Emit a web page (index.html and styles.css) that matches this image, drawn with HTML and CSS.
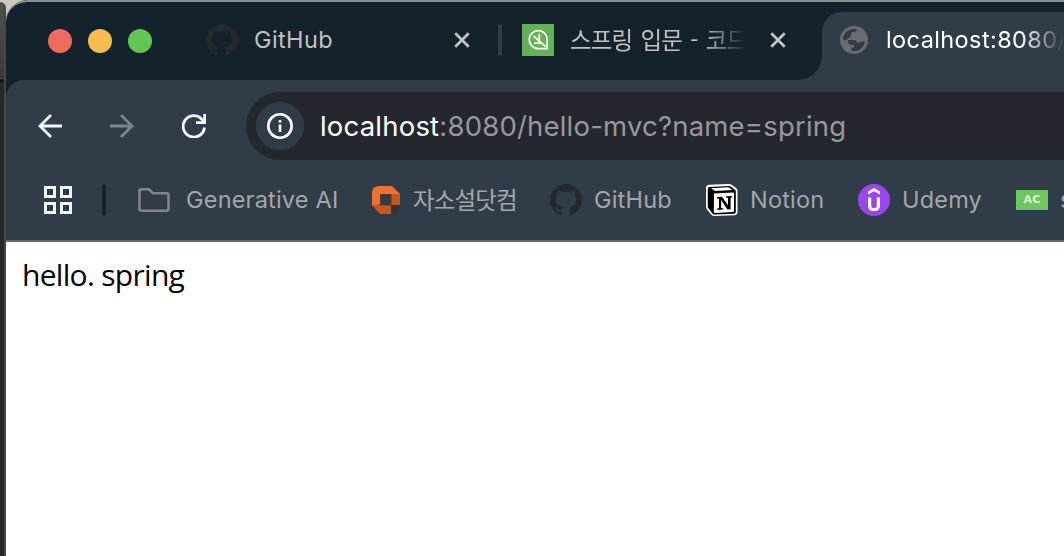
FILE: index.html
```html
<!DOCTYPE html>
<html lang="ko">
<head>
<meta charset="utf-8">
<title>localhost:8080/hello-mvc?name=spring</title>
<link rel="stylesheet" href="styles.css">
</head>
<body>
<svg width="0" height="0" class="defs">
  <symbol id="github" viewBox="0 0 16 16"><path d="M8 0C3.58 0 0 3.58 0 8c0 3.54 2.29 6.53 5.47 7.59.4.07.55-.17.55-.38 0-.19-.01-.82-.01-1.49-2.01.37-2.53-.49-2.69-.94-.09-.23-.48-.94-.82-1.13-.28-.15-.68-.52-.01-.53.63-.01 1.08.58 1.23.82.72 1.21 1.87.87 2.33.66.07-.52.28-.87.51-1.07-1.78-.2-3.64-.89-3.64-3.95 0-.87.31-1.59.82-2.15-.08-.2-.36-1.02.08-2.12 0 0 .67-.21 2.2.82.64-.18 1.32-.27 2-.27s1.36.09 2 .27c1.53-1.04 2.2-.82 2.2-.82.44 1.1.16 1.92.08 2.12.51.56.82 1.27.82 2.15 0 3.07-1.87 3.75-3.65 3.95.29.25.54.73.54 1.48 0 1.07-.01 1.93-.01 2.2 0 .21.15.46.55.38A8.01 8.01 0 0 0 16 8c0-4.42-3.58-8-8-8z"/></symbol>
  <symbol id="close" viewBox="0 0 16 16"><path d="M1.3 1.3 14.7 14.7M14.7 1.3 1.3 14.7" stroke="currentColor" stroke-width="2.7"/></symbol>
</svg>
<div class="screen">
  <div class="backdrop"></div>
  <div class="browser">
    <header class="tabs">
      <div class="lights"><i class="red"></i><i class="amber"></i><i class="green"></i></div>
      <div class="tab tab-github">
        <svg class="favicon mark"><use href="#github"/></svg>
        <span class="title">GitHub</span>
        <svg class="close"><use href="#close"/></svg>
      </div>
      <i class="divider"></i>
      <div class="tab tab-spring">
        <svg class="favicon" viewBox="0 0 32 32"><path fill="#65b157" d="M0 0h32v32H0z"/><g fill="none" stroke="#fff" stroke-width="1.700"><path d="M25.200 24.600H16A9 9 0 1 1 25.200 16z"/><path d="m11.500 12 12 10.500M17.300 17V9.800M19 19.200h-7"/></g></svg>
        <span class="title korean fade">스프링 입문 - 코드</span>
        <svg class="close"><use href="#close"/></svg>
      </div>
      <div class="tab active">
        <svg class="globe" viewBox="0 0 28 28"><circle cx="14" cy="14" r="14" fill="#6a6c70"/><path fill="#303d48" d="M2.900 14C3 7.500 8 2.900 14 2.900l2.800.4c0 1.700-1 2.700-2.700 2.700h-2.300c-1 1-.5 3-1.500 4.300 0 1-.7 1.600-1.700 1.600H7.300V14h7c1.700 0 2.500 1 2.500 2.500h2.500c1.500 0 2.500-1.600 5.600-1.600C24.200 21 19.800 25.100 14 25.100l-2.800-.3v-3.300h2.700v-2.700h-3c-1.500 0-2.700-1.100-2.700-2.700V14z"/></svg>
        <span class="title fade">localhost:8080/</span>
      </div>
    </header>
    <nav class="toolbar">
      <svg class="nav-icon" viewBox="0 0 24 24"><path d="M24 12H2M13 1 2 12l11 11"/></svg>
      <svg class="nav-icon disabled" viewBox="0 0 24 24"><path d="M0 12h22M11 1l11 11-11 11"/></svg>
      <svg class="nav-icon" viewBox="0 0 24 24"><path d="M22.500 13.500A10.700 10.700 0 1 1 19.800 5.200L22.500 8M22.600 0v8.600H14"/></svg>
      <div class="omnibox">
        <span class="info"><svg viewBox="0 0 26 26"><circle cx="13" cy="13" r="11.700"/><path d="M13 11.500V19M13 7v2.600"/></svg></span>
        <span class="url"><b>localhost</b>:8080/hello-mvc?name=spring</span>
      </div>
    </nav>
    <nav class="bookmarks">
      <svg class="apps" viewBox="0 0 28 28"><path d="M1.500 1.500h9v9h-9zM17.500 1.500h9v9h-9zM1.500 17.500h9v9h-9zM17.500 17.500h9v9h-9z"/></svg>
      <i class="divider dark"></i>
      <div class="bookmark"><svg viewBox="0 0 32 32"><path d="M3.500 5.300H11l4 4h13.500q2 0 2 2v13.400q0 2-2 2h-25q-2 0-2-2V7.300q0-2 2-2z" fill="none" stroke="#858585" stroke-width="2.600"/></svg><span class="generative">Generative AI</span></div>
      <div class="bookmark"><svg viewBox="0 0 28 28" class="small"><path fill="#ed7135" d="M7 0h13l8 8v11H9v-1L0 20V7q0-7 7-7z"/><path fill="#ca5720" d="M19 8h9v11h-9zM0 19h19v9H8z"/><path fill="#343434" d="M19 19h9q0 9-9 9z"/><path fill="#303d48" stroke="#473a35" d="M8.500 8.500h10.500V19H8.500z"/></svg><span class="korean">자소설닷컴</span></div>
      <div class="bookmark"><svg class="mark"><use href="#github"/></svg><span class="gh">GitHub</span></div>
      <div class="bookmark"><svg viewBox="0 0 32 32"><path fill="#fff" d="M3 .8 22.500 0q2 0 3.500 1l4 3q1.500 1 1.500 3v21q0 3-3 3.200L8.500 32q-2 0-3.300-1.500L1 25.500Q0 24 0 22V4Q0 1 3 .8z"/><path d="m3.500 3 19-1.100q1.500 0 2.500.8l4 3q.8.6.8 2v20.200q0 1.700-1.700 1.800L8.500 30.600q-1.200 0-2-1L2.600 24.500q-.8-1-.8-2.300V4.700Q1.800 3.100 3.500 3z"/><path fill="#fff" d="m5 4.300 16.500-1q1.300 0 2.200.6l2.700 2L9 7zM8 9.500 27 8.400q1 0 1 1.200v17.200q0 1-1 1.100L9 28.900q-1.200 0-1.200-1.200z"/><path d="m11 13 5-.3 6 8.500v-7.300l-1.900-.4v-1.200l6-.4v1.300l-1.500.5v11.500l-3.200.3-6.300-9.500v8l2.200.4v1.200l-6 .4v-1.300l1.700-.6V14.700l-2-.2z"/></svg><span>Notion</span></div>
      <div class="bookmark"><svg viewBox="0 0 32 32"><circle cx="16" cy="16" r="16" fill="#9848e8"/><g fill="#fff"><path d="m16 4 6 3.600v3L16 7.200l-6 3.400v-3zM10 13.500h3.200v8q0 2.800 2.800 2.800t2.800-2.800v-8H22v8q0 5.500-6 5.500t-6-5.500z"/></g></svg><span>Udemy</span></div>
      <div class="bookmark"><span class="ac">AC</span><span>s</span></div>
    </nav>
    <main class="page">hello. spring</main>
  </div>
</div>
</body>
</html>
```
FILE: styles.css
```css
* { box-sizing: border-box; }
body { margin: 0; overflow: hidden; font-family: Inter, "Noto Sans CJK KR", sans-serif; }
svg { display: block; flex: none; }
.defs { position: absolute; }
.screen { display: flex; width: 1064px; height: 556px; background: linear-gradient(#cbc9c0 0 30px, #292a2b 30px); overflow: hidden; }
.backdrop { width: 6px; height: 554px; margin-top: 2px; border-right: 2px solid #454647; border-radius: 0 9px 0 0; background: linear-gradient(#505151 0, #393a3b 77px, #111 78px 80px, #272829 80px); }
.browser { flex: none; width: 1058px; background: #14222c; border-radius: 22px 0 0; overflow: hidden; }
.tabs { display: flex; height: 80px; border-top: 2px solid #899197; overflow: hidden; border-radius: 22px 0 0; }
.lights { display: flex; gap: 16px; padding: 27px 0 0 42px; width: 200px; }
.lights i { width: 24px; height: 24px; border-radius: 50%; }
.red { background: #ee6b60; }
.amber { background: #f6be50; }
.green { background: #62c655; }
.tab { display: flex; align-items: center; height: 76px; color: #c0c1c2; }
.tab-github { width: 292px; }
.favicon { width: 32px; height: 32px; margin-right: 16px; }
.mark { fill: #24292e; }
.title { font-size: 23.5px; line-height: 32px; white-space: nowrap; overflow: hidden; letter-spacing: .4px; }
.tab-github .title { width: 200px; }
.close { width: 16px; height: 16px; color: #c4c5c6; }
.divider { width: 4px; height: 32px; margin-top: 22px; border-radius: 2px; background: #303d48; }
.tab-spring { width: 320px; padding-left: 20px; border-radius: 0 0 24px; }
.tab-spring .title { width: 176px; margin: 0 24px 3px 0; word-spacing: 2.6px; }
.korean { font-family: "Noto Sans CJK KR", sans-serif; letter-spacing: -.9px; }
.bookmark .korean { margin: 0 0 3px 1px; }
.fade { -webkit-mask-image: linear-gradient(90deg, #000 76%, transparent); mask-image: linear-gradient(90deg, #000 76%, transparent); }
.active { width: 242px; height: 68px; margin-top: 10px; padding: 0 0 12px 18px; border-radius: 20px 0 0; background: #303d48; position: relative; overflow: visible; color: #fff; }
.active::before { content: ""; position: absolute; width: 24px; height: 24px; left: -24px; bottom: 0; background: radial-gradient(circle at 0 0, transparent 23.5px, #303d48 24px); }
.globe { width: 28px; height: 28px; margin-right: 18px; }
.active .title { width: 178px; }
.toolbar { display: flex; align-items: center; height: 88px; padding: 4px 0 0 32px; gap: 48px; background: #303d48; border-radius: 18px 0 0; }
.nav-icon { width: 24px; height: 24px; fill: none; stroke: #f4f7f9; stroke-width: 2.8; }
.disabled { stroke: #7d858b; }
.omnibox { display: flex; align-items: center; width: 820px; height: 68px; margin-left: -8px; padding-left: 10px; border-radius: 34px 0 0 34px; background: #25272f; }
.info { display: grid; place-items: center; width: 48px; height: 48px; margin-right: 16px; border-radius: 50%; background: #303d48; }
.info svg { width: 26px; height: 26px; fill: none; stroke: #fff; stroke-width: 2.6; }
.url { font-size: 27.5px; line-height: 40px; letter-spacing: .2px; color: #97989b; white-space: nowrap; }
.url b { color: #fff; font-weight: 400; }
.bookmarks { display: grid; grid-template-columns: 58px 36px 234px 178px 156px 152px 158px 100px; align-items: center; height: 74px; padding: 0 0 8px 38px; border-bottom: 2px solid #5e6673; background: #303d48; }
.apps { width: 28px; height: 28px; fill: none; stroke: #f4f7f9; stroke-width: 3; }
.dark { margin-top: 0; background: #14222c; }
.bookmark { display: flex; align-items: center; gap: 12px; font-size: 23.5px; line-height: 32px; letter-spacing: .2px; color: #a5a6a7; white-space: nowrap; }
.bookmark svg { width: 32px; height: 32px; }
.bookmark .small { width: 28px; height: 28px; }
.bookmark .generative { margin-left: 4px; }
.ac { flex: none; width: 32px; height: 20px; background: #6fc660; color: #d9f2d4; font: bold 11px/20px "DejaVu Sans", sans-serif; text-align: center; }
.page { height: 314px; padding: 11px 16px; background: #fff; color: #000; font: 30px/44px "Open Sans", sans-serif; letter-spacing: -.7px; }
```
